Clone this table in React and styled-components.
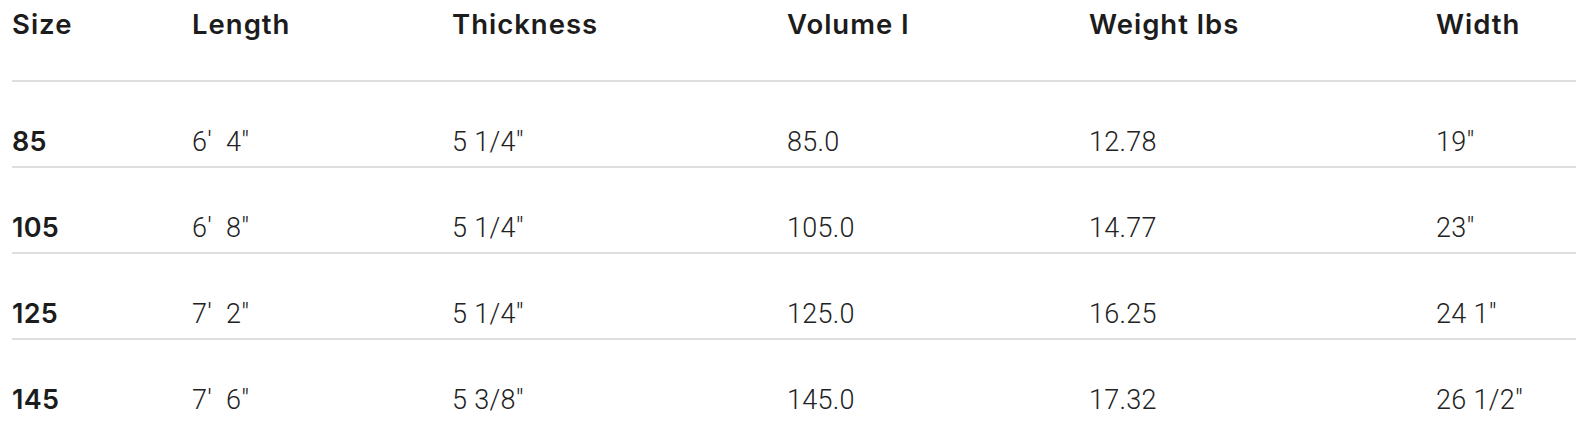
import styled, { createGlobalStyle } from "styled-components";

const GlobalStyle = createGlobalStyle`
  body {
    margin: 0;
    background: #fff;
    overflow: hidden;
  }
`;

const Wrapper = styled.div`
  padding-left: 12px;
  font-family: Inter, "Liberation Sans", sans-serif;
  color: #1c1c1c;
`;

const Row = styled.div`
  display: grid;
  grid-template-columns: 180px 260px 335px 302px 347px 1fr;
  border-bottom: 2px solid ${(props) => (props.$last ? "transparent" : "#dedede")};
`;

const HeadCell = styled.div`
  font-size: 27.5px;
  line-height: 36px;
  font-weight: 600;
  letter-spacing: 1px;
  padding: 6px 0 38px;
  white-space: nowrap;
`;

const Cell = styled.div`
  font-family: ${(props) => (props.$bold ? "Inter" : "Roboto")}, "Liberation Sans", sans-serif;
  font-size: 27px;
  line-height: 36px;
  font-weight: ${(props) => (props.$bold ? 600 : 300)};
  letter-spacing: ${(props) => (props.$bold ? "0.3px" : "0.3px")};
  color: ${(props) => (props.$bold ? "#1c1c1c" : "#222")};
  padding: 42px 0 6px;
  white-space: pre;
`;

const headers = ["Size", "Length", "Thickness", "Volume l", "Weight lbs", "Width"];

const rows = [
  ["85", "6'  4\"", "5 1/4\"", "85.0", "12.78", "19\""],
  ["105", "6'  8\"", "5 1/4\"", "105.0", "14.77", "23\""],
  ["125", "7'  2\"", "5 1/4\"", "125.0", "16.25", "24 1\""],
  ["145", "7'  6\"", "5 3/8\"", "145.0", "17.32", "26 1/2\""],
];

const App = () => {
  return (
    <Wrapper>
      <GlobalStyle />
      <Row>
        {headers.map((h) => (
          <HeadCell key={h}>{h}</HeadCell>
        ))}
      </Row>
      {rows.map((r, i) => (
        <Row key={r[0]} $last={i === rows.length - 1}>
          {r.map((v, j) => (
            <Cell key={j} $bold={j === 0}>
              {v}
            </Cell>
          ))}
        </Row>
      ))}
    </Wrapper>
  );
};

export default App;
